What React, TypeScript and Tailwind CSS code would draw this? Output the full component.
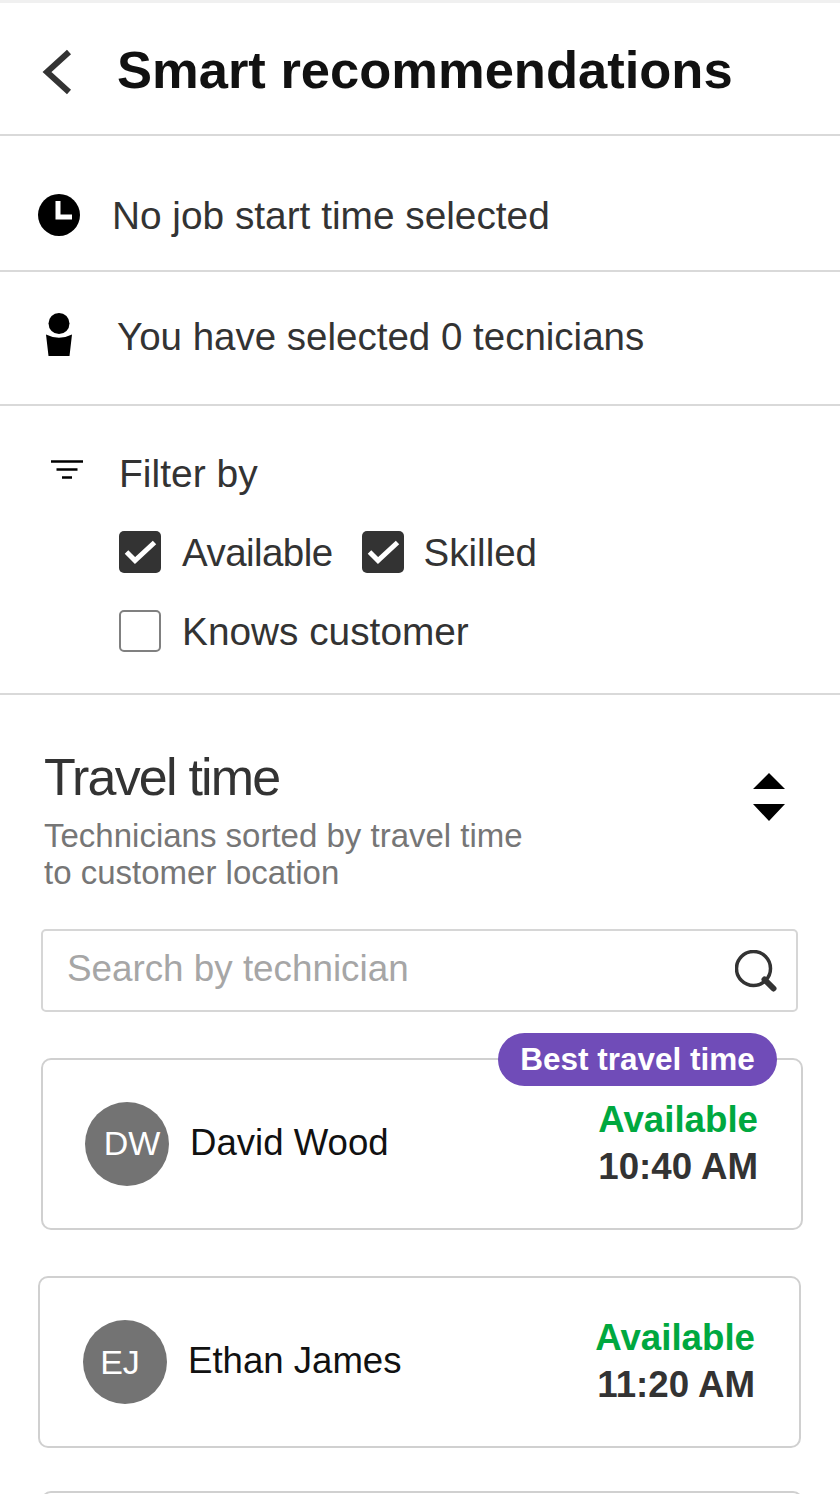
import React from 'react';

const font = "font-['Liberation_Sans',Arial,sans-serif]";

const CheckBox: React.FC<{ checked?: boolean; label: string; textClass: string }> = ({ checked, label, textClass }) => (
  <div className="flex items-center gap-[21px]">
    {checked ? (
      <span className="flex h-[42px] w-[42px] items-center justify-center rounded-[5px] bg-[#333333]">
        <svg width="42" height="42" viewBox="0 0 42 42" fill="none">
          <path d="M7.500 21 L16 29.500 L35.500 11.500" stroke="#fff" strokeWidth="5" />
        </svg>
      </span>
    ) : (
      <span className="h-[42px] w-[42px] rounded-[5px] border-2 border-[#808080] bg-white" />
    )}
    <span className={`pt-[2px] leading-[40px] text-[#333333] ${textClass}`}>{label}</span>
  </div>
);

const TechCard: React.FC<{
  initials: string;
  name: string;
  time: string;
  className: string;
  initialsClass: string;
  best?: boolean;
}> = ({ initials, name, time, className, initialsClass, best }) => (
  <div className={`relative flex h-[172px] items-center justify-between rounded-[10px] border-2 border-[#d0d0d0] bg-white ${className}`}>
    {best && (
      <span className="absolute right-[24px] top-[-27px] flex h-[53px] w-[279px] items-center justify-center rounded-full bg-[#704cb8] text-[31.500px] font-bold text-white">
        Best travel time
      </span>
    )}
    <div className="flex items-center gap-[21px]">
      <span className={`flex h-[84px] w-[84px] items-center justify-center rounded-full bg-[#737373] text-[34px] text-white ${initialsClass}`}>
        {initials}
      </span>
      <span className="pb-[2px] text-[36.600px] text-[#111111]">{name}</span>
    </div>
    <div className="flex flex-col items-end pb-[2px] text-[36.700px] font-bold leading-[47px]">
      <span className="text-[#00a83f]">Available</span>
      <span className="text-[#333333]">{time}</span>
    </div>
  </div>
);

export default function App() {
  return (
    <div className={`h-[1494px] w-[840px] overflow-hidden bg-white ${font}`}>
      <div className="h-[3px] bg-[#f0f0f0]" />
      <header className="flex h-[133px] items-center border-b-2 border-[#d9d9d9] pl-[42px] pt-[6px]">
        <svg width="30" height="46" viewBox="0 0 30 46" fill="none">
          <path d="M27 3 L5 23 L27 43" stroke="#333333" strokeWidth="6" />
        </svg>
        <h1 className="ml-[45px] pb-[2px] text-[52.500px] font-bold text-[#111111]">Smart recommendations</h1>
      </header>

      <div className="flex h-[136px] items-center border-b-2 border-[#d9d9d9] pl-[38px] pt-[24px]">
        <svg width="42" height="42" viewBox="0 0 42 42">
          <circle cx="21" cy="21" r="21" fill="#000" />
          <path d="M20 7 V23 H34" fill="none" stroke="#fff" strokeWidth="5" />
        </svg>
        <span className="ml-[32px] pt-[2px] text-[38.800px] text-[#333333]">No job start time selected</span>
      </div>

      <div className="flex h-[134px] items-center border-b-2 border-[#d9d9d9] pl-[46px]">
        <svg className="mb-[8px]" width="26" height="43" viewBox="0 0 26 43">
          <circle cx="13" cy="10.500" r="10.500" fill="#000" />
          <path d="M0 21.500 Q13 28 26 21.500 L23.500 43 H2.500 Z" fill="#000" />
        </svg>
        <span className="ml-[45px] pb-[2px] text-[38.500px] text-[#333333]">You have selected 0 tecnicians</span>
      </div>

      <section className="h-[289px] border-b-2 border-[#d9d9d9] pl-[51px] pt-[47px]">
        <div className="flex items-center">
          <svg className="mb-[9px]" width="32" height="20" viewBox="0 0 32 20">
            <path d="M0 1.500 H32 M5.500 9.500 H26.500 M11 17.500 H21" stroke="#000" strokeWidth="2.500" />
          </svg>
          <span className="ml-[36px] text-[39px] leading-[42px] text-[#333333]">Filter by</span>
        </div>
        <div className="ml-[68px] mt-[36px] flex flex-col gap-[37px]">
          <div className="flex gap-[29px]">
            <CheckBox checked label="Available" textClass="text-[38.500px] tracking-[-0.55px]" />
            <CheckBox checked label="Skilled" textClass="text-[38.500px] -ml-[1px]" />
          </div>
          <CheckBox label="Knows customer" textClass="text-[38.800px]" />
        </div>
      </section>

      <section className="pt-[53px]">
        <div className="flex justify-between pl-[44px] pr-[55px]">
          <div>
            <h2 className="text-[52px] leading-[58px] tracking-[-1.800px] text-[#333333]">Travel time</h2>
            <p className="mt-[11px] text-[33px] leading-[37px] text-[#767676]">
              Technicians sorted by travel time
              <br />
              to customer location
            </p>
          </div>
          <svg className="mt-[25px]" width="32" height="48" viewBox="0 0 32 48">
            <path d="M16 0 L32 16 H0 Z M0 31 H32 L16 48 Z" fill="#000" />
          </svg>
        </div>

        <div className="ml-[41px] mt-[38px] flex h-[83px] w-[757px] items-center justify-between rounded-[5px] border-2 border-[#d6d6d6] pl-[24px] pr-[19px]">
          <span className="pb-[4px] text-[36.800px] text-[#a6a6a6]">Search by technician</span>
          <svg width="42" height="42" viewBox="0 0 42 42" fill="none">
            <circle cx="18.500" cy="18.500" r="17" stroke="#333333" strokeWidth="3.500" />
            <path d="M29.500 29.500 L38.500 38.500" stroke="#333333" strokeWidth="6" strokeLinecap="round" />
          </svg>
        </div>

        <TechCard
          best
          initials="DW"
          name="David Wood"
          time="10:40 AM"
          initialsClass="pl-[10px] pb-[2px]"
          className="ml-[41px] mt-[46px] w-[762px] pl-[42px] pr-[43px]"
        />
        <TechCard
          initials="EJ"
          name="Ethan James"
          time="11:20 AM"
          initialsClass="pr-[10px]"
          className="ml-[38px] mt-[46px] w-[763px] pl-[43px] pr-[44px]"
        />
        <div className="ml-[41px] mt-[43px] h-[172px] w-[762px] rounded-[10px] border-2 border-[#d0d0d0]" />
      </section>
    </div>
  );
}
